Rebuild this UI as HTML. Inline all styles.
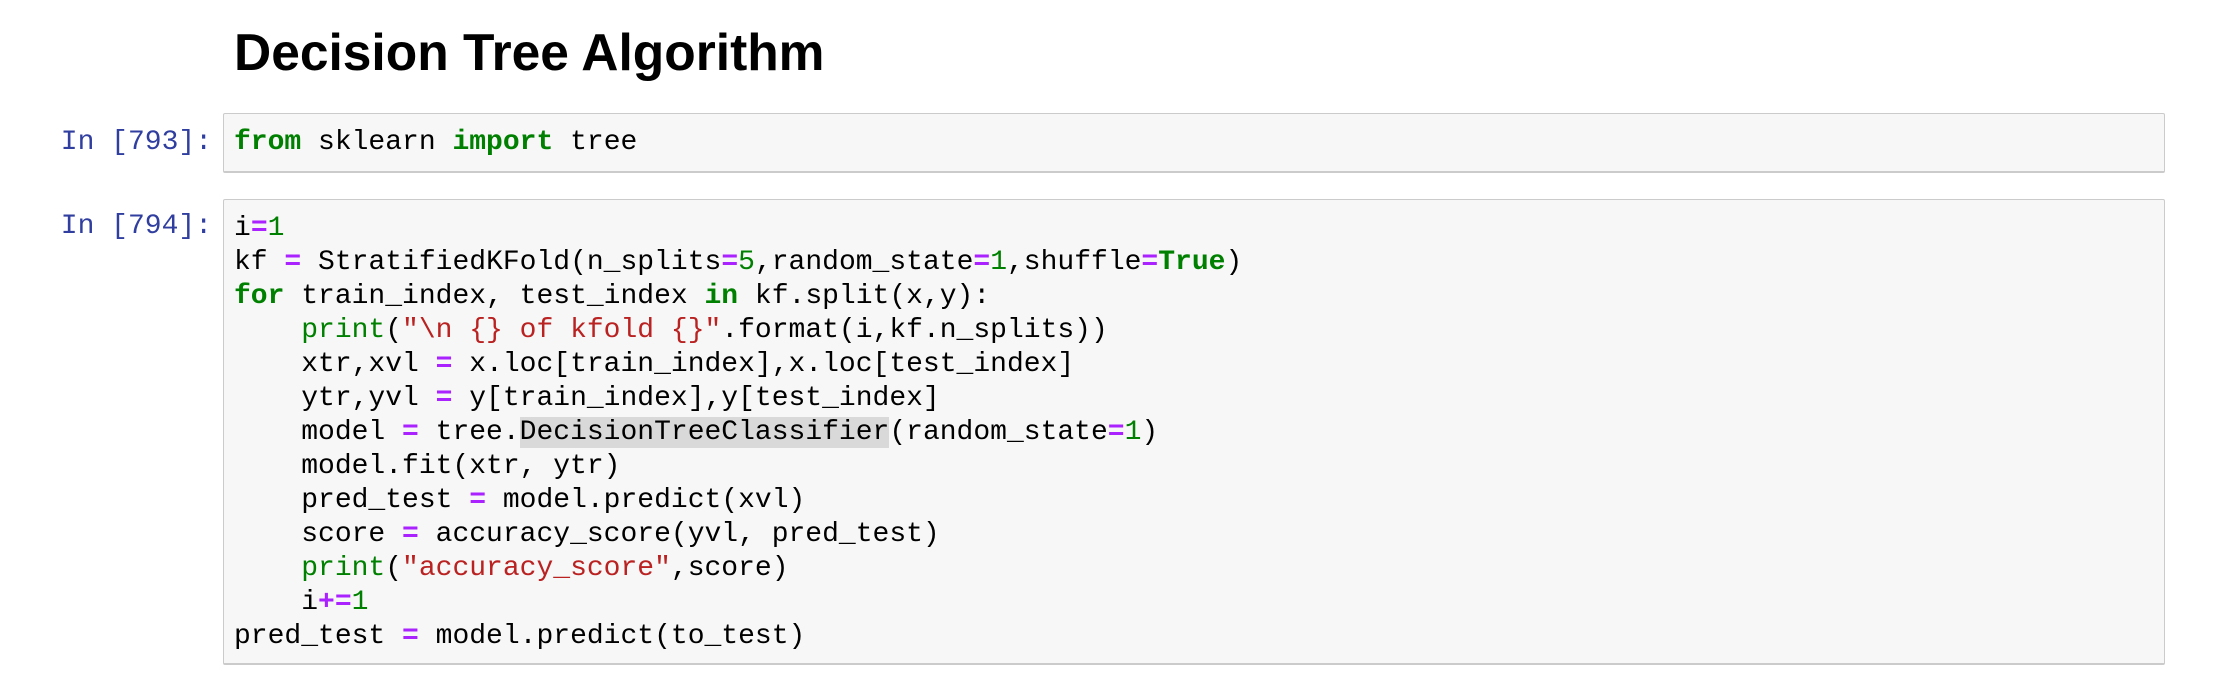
<!DOCTYPE html>
<html><head><meta charset="utf-8"><style>
body{margin:0;width:2216px;height:682px;background:#fff;position:relative;overflow:hidden}
h1{position:absolute;left:234px;top:27px;margin:0;font:bold 51.5px/51px "Liberation Sans",sans-serif;color:#000}
.p{position:absolute;left:0;width:212px;text-align:right;font:28px/34px "Liberation Mono",monospace;color:#303F9F}
.box{position:absolute;left:223px;width:1942px;background:#f7f7f7;border:1px solid #cbcbcb;border-bottom:2px solid #cbcbcb;border-radius:2px;box-sizing:border-box;padding:12px 10px}
pre{margin:0;font:28px/34px "Liberation Mono",monospace;color:#000;white-space:pre}
.k{color:#008000;font-weight:bold}.o{color:#AA22FF;font-weight:bold}.n{color:#008000}.s{color:#BA2121}.b{color:#008000}
.h{background:#d9d9d9}
</style></head><body>
<h1>Decision Tree Algorithm</h1>
<div class="p" style="top:126px">In [793]:</div>
<div class="box" style="top:113px;height:60px"><pre><span class="k">from</span> sklearn <span class="k">import</span> tree</pre></div>
<div class="p" style="top:210px">In [794]:</div>
<div class="box" style="top:199px;height:466px"><pre>i<span class="o">=</span><span class="n">1</span>
kf <span class="o">=</span> StratifiedKFold(n_splits<span class="o">=</span><span class="n">5</span>,random_state<span class="o">=</span><span class="n">1</span>,shuffle<span class="o">=</span><span class="k">True</span>)
<span class="k">for</span> train_index, test_index <span class="k">in</span> kf.split(x,y):
    <span class="b">print</span>(<span class="s">"\n {} of kfold {}"</span>.format(i,kf.n_splits))
    xtr,xvl <span class="o">=</span> x.loc[train_index],x.loc[test_index]
    ytr,yvl <span class="o">=</span> y[train_index],y[test_index]
    model <span class="o">=</span> tree.<span class="h">DecisionTreeClassifier</span>(random_state<span class="o">=</span><span class="n">1</span>)
    model.fit(xtr, ytr)
    pred_test <span class="o">=</span> model.predict(xvl)
    score <span class="o">=</span> accuracy_score(yvl, pred_test)
    <span class="b">print</span>(<span class="s">"accuracy_score"</span>,score)
    i<span class="o">+=</span><span class="n">1</span>
pred_test <span class="o">=</span> model.predict(to_test)</pre></div>
</body></html>
